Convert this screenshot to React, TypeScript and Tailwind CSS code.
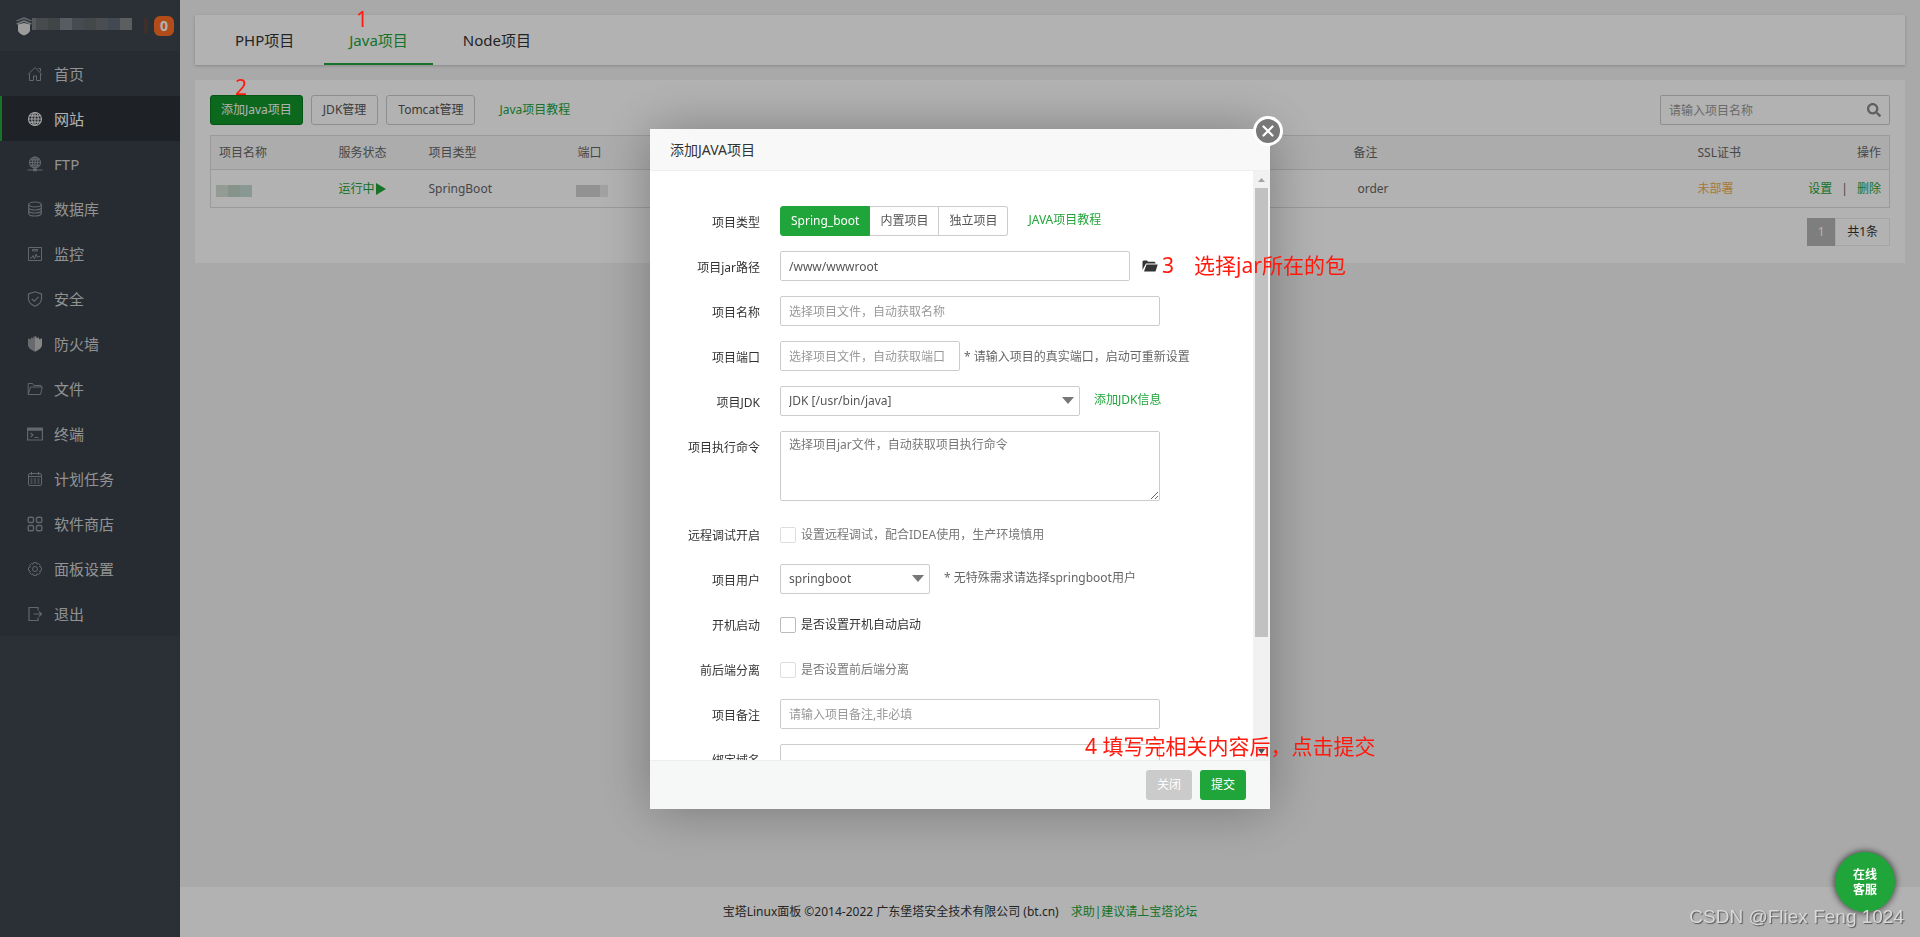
import { useState } from "react";
import type { ReactNode } from "react";
import { FaSearch } from "react-icons/fa";

const stroke = { fill: "none", stroke: "currentColor", strokeWidth: 1 };

const icons: Record<string, ReactNode> = {
  home: (
    <g {...stroke}>
      <path d="M1 8.5 8 1.5l7 7M2.5 7.5v7h4V10h3v4.5h4v-7M11.5 2.5h2v3" />
    </g>
  ),
  site: (
    <g {...stroke} strokeWidth={1.2}>
      <circle cx="8" cy="8" r="6.5" />
      <ellipse cx="8" cy="8" rx="3.2" ry="6.5" />
      <path d="M8 1.5v13M1.5 8h13M2.5 4.8h11M2.5 11.2h11" />
    </g>
  ),
  ftp: (
    <g {...stroke} strokeWidth={1.2}>
      <circle cx="8" cy="6.5" r="5.5" />
      <ellipse cx="8" cy="6.5" rx="2.6" ry="5.5" />
      <path d="M8 1v12M2.5 6.5h11M3.5 3.8h9M3.5 9.2h9M.5 14h15" />
      <path d="M6 14h4" strokeWidth={2.5} />
    </g>
  ),
  database: (
    <g {...stroke} strokeWidth={1.2}>
      <ellipse cx="8" cy="3.5" rx="6.3" ry="2.5" />
      <path d="M1.7 3.5v9c0 3.3 12.6 3.3 12.6 0v-9M1.7 6.5c0 3.3 12.6 3.3 12.6 0M1.7 9.5c0 3.3 12.6 3.3 12.6 0" />
    </g>
  ),
  monitor: (
    <g {...stroke}>
      <path d="M1.5 1.5h13v13h-13zM5.5 3.5h5V5h-5zM3 12h1.5L6 9.5 7.5 13 9 8l1.500 3.500 1-1H13" />
    </g>
  ),
  shield: (
    <g {...stroke} strokeWidth={1.2}>
      <path d="M8 .8 14.5 3v4.8c0 3.5-3 6-6.500 7.500-3.500-1.500-6.500-4-6.500-7.500V3zM4.800 7.800l2.400 2.400 4.400-4.400" />
    </g>
  ),
  firewall: (
    <g>
      <path fill="currentColor" opacity=".7" d="M8 .5v15.3C4 14 1 11.5 1 9V2.5h1.500v1L4 3V1.500h1.500v1l1-.5V.5z" />
      <path fill="currentColor" d="M8 .5v15.3c4-1.800 7-4.300 7-6.800V2.500h-1.500v1L12 3V1.500h-1.500v1l-1-.5V.5z" />
    </g>
  ),
  folder: (
    <g {...stroke}>
      <path d="M1.2 13.5v-11h4.500l1.300 2h7v1.500M1.200 13.500l2.300-7.500h11.800l-1.800 7.500z" />
    </g>
  ),
  terminal: (
    <g>
      <path {...stroke} strokeWidth={1.2} d="M.6 2h14.800v12H.6zM3.500 7L6 9l-2.500 2M7.500 11.500h4" />
      <path fill="currentColor" d="M.6 2h14.800v2.800H.6z" />
    </g>
  ),
  calendar: (
    <g {...stroke}>
      <rect x="1.5" y="2.5" width="13" height="12" rx="1.5" />
      <path d="M1.5 5.5h13M4.5 1v3M11.5 1v3" />
      <path strokeDasharray="2 1.5" d="M3.5 8h9.500M3.500 10h9.500M3.500 12h9.500" />
    </g>
  ),
  store: (
    <g {...stroke} strokeWidth={1.4}>
      <rect x="1.2" y="1.2" width="5.3" height="5.3" rx="1.3" />
      <rect x="9.5" y="1.2" width="5.3" height="5.3" rx="1.3" />
      <rect x="1.2" y="9.5" width="5.3" height="5.3" rx="1.3" />
      <rect x="9.5" y="9.5" width="5.3" height="5.3" rx="1.3" />
    </g>
  ),
  setting: (
    <g {...stroke}>
      <circle cx="8" cy="8" r="2.5" />
      <path d="M6.7 1.5h2.600l.6 1.700 1.600-.7 1.900 1.900-.7 1.600 1.800.7v2.600l-1.800.7.7 1.600-1.900 1.900-1.600-.7-.6 1.700H6.700l-.6-1.700-1.600.7-1.900-1.900.7-1.600-1.800-.7V6.700l1.800-.7-.7-1.600 1.900-1.900 1.600.7z" />
    </g>
  ),
  exit: (
    <g {...stroke} strokeWidth={1.2}>
      <path d="M11 4.5v-3H2v13h9v-3M6.5 8h8M12 5.5 14.5 8 12 10.5" />
    </g>
  ),
};

const menu = [
  { icon: "home", name: "首页" },
  { icon: "site", name: "网站" },
  { icon: "ftp", name: "FTP" },
  { icon: "database", name: "数据库" },
  { icon: "monitor", name: "监控" },
  { icon: "shield", name: "安全" },
  { icon: "firewall", name: "防火墙" },
  { icon: "folder", name: "文件" },
  { icon: "terminal", name: "终端" },
  { icon: "calendar", name: "计划任务" },
  { icon: "store", name: "软件商店" },
  { icon: "setting", name: "面板设置" },
  { icon: "exit", name: "退出" },
];

const tabs = ["PHP项目", "Java项目", "Node项目"];
const types = ["Spring_boot", "内置项目", "独立项目"];

const inputCls =
  "h-[30px] rounded-[2px] border border-[#ccc] bg-white px-2 text-xs text-[#555] placeholder:text-[#999] outline-none";
const linkCls = "text-[#20a53a]";
const btnCls = "h-[30px] rounded-[3px] border border-[#ccc] px-[11px] text-xs text-[#555]";

function Sidebar() {
  return (
    <aside className="fixed inset-y-0 left-0 w-[180px] bg-[#3d454e]">
      <div className="flex h-[51px] items-center pl-4 pr-[6px]">
        <svg viewBox="0 0 16 20" className="h-5 w-4 shrink-0">
          <path d="M0 4.5 8 1l8 3.5-1 1L8 3 1 5.500z" fill="#8d9296" />
          <path d="M0 7.5 8 4l8 3.5-1.500 1.200L8 6 1.500 8.700z" fill="#a3a7aa" />
          <path d="M2 8.5 8 7l6 1.500V14c0 2.500-3 4.500-6 5.500-3-1-6-3-6-5.500z" fill="#e0e0e0" />
        </svg>
        <div className="mb-1 flex h-3">
          <i className="w-1 bg-[#7d8084]" />
          <i className="w-3 bg-[#666c70]" />
          <i className="w-3 bg-[#5e6367]" />
          <i className="w-3 bg-[#7f848d]" />
          <i className="w-3 bg-[#666c74]" />
          <i className="w-3 bg-[#60676c]" />
          <i className="w-3 bg-[#6b7075]" />
          <i className="w-3 bg-[#5f6973]" />
          <i className="w-3 bg-[#85888a]" />
        </div>
        <i className="ml-3 h-4 w-1 rounded-r bg-[#58453f]" />
        <span className="ml-auto h-5 w-5 rounded-[6px] bg-[#ff6f25] text-center text-sm leading-5 font-bold text-white">0</span>
      </div>
      <ul className="bg-[#373f48]">
        {menu.map((m) => (
          <li key={m.name}>
            <a
              href="#"
              className={
                m.icon === "site"
                  ? "flex h-[45px] items-center gap-[11px] border-l-2 border-[#20a53a] bg-[#2c3138] pl-[25px] text-[15px] leading-5 text-white"
                  : "flex h-[45px] items-center gap-[11px] border-l-2 border-[#3a3f42] pl-[25px] text-[15px] leading-5 text-[#d2d2d2]"
              }
            >
              <svg
                viewBox="0 0 16 16"
                className={m.icon === "site" ? "h-4 w-4 text-[#e8e8e8]" : m.icon === "firewall" ? "h-4 w-4 text-[#c0c0c0]" : "h-4 w-4 text-[#8e9398]"}
              >
                {icons[m.icon]}
              </svg>
              {m.name}
            </a>
          </li>
        ))}
      </ul>
    </aside>
  );
}

function ProjectTable() {
  return (
    <table className="mt-[10px] w-full table-fixed border border-[#ddd] text-left text-xs text-[#666]">
      <colgroup>
        <col className="w-[120px]" />
        <col className="w-[90px]" />
        <col className="w-[149px]" />
        <col />
        <col className="w-[344px]" />
        <col className="w-[101px]" />
        <col className="w-[99px]" />
      </colgroup>
      <thead>
        <tr className="h-[34px] border-b border-[#ddd] bg-[#f6f6f6]">
          <th className="px-2 font-normal">项目名称</th>
          <th className="px-2 font-normal">服务状态</th>
          <th className="px-2 font-normal">项目类型</th>
          <th className="px-2 font-normal">端口</th>
          <th className="px-2 font-normal">备注</th>
          <th className="px-2 font-normal">SSL证书</th>
          <th className="px-2 text-right font-normal">操作</th>
        </tr>
      </thead>
      <tbody>
        <tr className="h-[38px]">
          <td className="px-[5px]">
            <div className="mt-1 flex h-3">
              <i className="w-3 bg-[#d3dfd5]" />
              <i className="w-3 bg-[#c0d3c6]" />
              <i className="w-3 bg-[#c5dad2]" />
            </div>
          </td>
          <td className="px-2">
            <a href="#" className="flex items-center text-[#20a53a]">
              运行中
              <svg viewBox="0 0 10 12" className="ml-px h-3 w-[10px]">
                <path d="M0 0l10 6-10 6z" fill="currentColor" />
              </svg>
            </a>
          </td>
          <td className="px-2">SpringBoot</td>
          <td className="px-[6px]">
            <div className="mt-1 flex h-3">
              <i className="w-6 bg-[#d2d2d2]" />
              <i className="w-2 bg-[#e8e8e8]" />
            </div>
          </td>
          <td className="px-3">order</td>
          <td className="px-2">
            <a href="#" className="text-[#f0ad4e]">未部署</a>
          </td>
          <td className="px-2 text-right whitespace-nowrap">
            <a href="#" className={linkCls}>设置</a>
            <span className="mx-[9px]">|</span>
            <a href="#" className={linkCls}>删除</a>
          </td>
        </tr>
      </tbody>
    </table>
  );
}

function Row({ label, id, children }: { label: string; id: string; children: ReactNode }) {
  return (
    <div className="mb-[13px] flex">
      <label htmlFor={id} className="mr-5 h-8 w-[100px] shrink-0 text-right text-xs leading-[34px] text-[#333]">
        {label}
      </label>
      <div className="flex grow items-start text-xs text-[#666]">{children}</div>
    </div>
  );
}

function Select({ id, value, width }: { id: string; value: string; width: string }) {
  return (
    <div className={`relative ${width}`}>
      <select id={id} className={`${inputCls} w-full appearance-none`}>
        <option>{value}</option>
      </select>
      <svg viewBox="0 0 12 7" className="pointer-events-none absolute top-[11px] right-[6px] h-[7px] w-3">
        <path d="M0 0h12L6 7z" fill="#777" />
      </svg>
    </div>
  );
}

function Check({ id, text, disabled }: { id: string; text: string; disabled?: boolean }) {
  return (
    <div className="flex h-8 items-center gap-[5px]">
      <input
        id={id}
        type="checkbox"
        disabled={disabled}
        className={disabled ? "h-4 w-4 appearance-none rounded-[2px] border border-[#ddd]" : "h-4 w-4 appearance-none rounded-[2px] border border-[#bbb]"}
      />
      <label htmlFor={id} className={disabled ? "text-[#777]" : "text-[#333]"}>{text}</label>
    </div>
  );
}

function ProjectDialog() {
  const [type, setType] = useState(types[0]);

  return (
    <div role="dialog" aria-label="添加JAVA项目" className="relative flex h-[680px] w-[620px] flex-col bg-white shadow-[1px_1px_50px_rgba(0,0,0,0.3)]">
      <header className="flex h-[42px] shrink-0 items-center border-b border-[#eee] bg-[#f8f8f8] px-5 text-sm text-[#333]">添加JAVA项目</header>
      <button aria-label="关闭窗口" className="absolute -top-[13px] -right-[13px] h-[30px] w-[30px] rounded-full border-[3px] border-white bg-[#787878]">
        <svg viewBox="0 0 24 24" className="h-6 w-6">
          <path d="M7.5 7.5l9 9M16.5 7.5l-9 9" stroke="#fff" strokeWidth="2.2" strokeLinecap="round" fill="none" />
        </svg>
      </button>

      <div className="flex min-h-0 grow">
        <form className="grow overflow-y-auto pt-[35px] pl-[10px] [scrollbar-width:none]">
          <Row label="项目类型" id="type">
            <div id="type" className="flex">
              {types.map((t) => (
                <button
                  key={t}
                  type="button"
                  onClick={() => setType(t)}
                  className={
                    t === type
                      ? "h-[30px] rounded-l-[3px] border border-[#20a53a] bg-[#20a53a] px-[10px] text-white"
                      : "h-[30px] border border-l-0 border-[#ccc] px-[10px] text-[#555] last:rounded-r-[3px]"
                  }
                >
                  {t}
                </button>
              ))}
            </div>
            <a href="#" className="ml-5 leading-7 text-[#20a53a]">JAVA项目教程</a>
          </Row>
          <Row label="项目jar路径" id="jar">
            <input id="jar" defaultValue="/www/wwwroot" className={`${inputCls} w-[350px]`} />
            <svg viewBox="0 0 16 14" className="mt-2 ml-3 h-[14px] w-4 text-[#333]">
              <path d="M.5 11V2.500l1-1H5l1 1.200h6.500l1 1v.8H4L1.500 9z" fill="currentColor" />
              <path d="M4.5 5.5h11.200l-2.200 7H2z" fill="currentColor" />
            </svg>
          </Row>
          <Row label="项目名称" id="name">
            <input id="name" placeholder="选择项目文件，自动获取名称" className={`${inputCls} w-[380px]`} />
          </Row>
          <Row label="项目端口" id="port">
            <input id="port" placeholder="选择项目文件，自动获取端口" className={`${inputCls} w-[180px]`} />
            <span className="ml-1 leading-8">* 请输入项目的真实端口，启动可重新设置</span>
          </Row>
          <Row label="项目JDK" id="jdk">
            <Select id="jdk" value="JDK [/usr/bin/java]" width="w-[300px]" />
            <a href="#" className="ml-[14px] leading-7 text-[#20a53a]">添加JDK信息</a>
          </Row>
          <Row label="项目执行命令" id="cmd">
            <textarea
              id="cmd"
              placeholder="选择项目jar文件，自动获取项目执行命令"
              className="mb-[5px] h-[70px] w-[380px] rounded-[2px] border border-[#ccc] px-2 py-1 text-xs leading-[18px] outline-none placeholder:text-[#777]"
            />
          </Row>
          <Row label="远程调试开启" id="debug">
            <Check id="debug" text="设置远程调试，配合IDEA使用，生产环境慎用" disabled />
          </Row>
          <Row label="项目用户" id="user">
            <Select id="user" value="springboot" width="w-[150px]" />
            <span className="ml-[14px] leading-7">* 无特殊需求请选择springboot用户</span>
          </Row>
          <Row label="开机启动" id="boot">
            <Check id="boot" text="是否设置开机自动启动" />
          </Row>
          <Row label="前后端分离" id="split">
            <Check id="split" text="是否设置前后端分离" disabled />
          </Row>
          <Row label="项目备注" id="ps">
            <input id="ps" placeholder="请输入项目备注,非必填" className={`${inputCls} w-[380px]`} />
          </Row>
          <Row label="绑定域名" id="domain">
            <textarea id="domain" className="h-[100px] w-[380px] rounded-[2px] border border-[#ccc] px-2 py-1 text-xs outline-none" />
          </Row>
        </form>
        <div className="flex w-[17px] shrink-0 flex-col items-center bg-[#f1f1f1]">
          <svg viewBox="0 0 17 17" className="size-[17px] shrink-0">
            <path d="M5 11h7L8.5 7z" fill="#a3a3a3" />
          </svg>
          <div className="h-[449px] w-[13px] bg-[#c1c1c1]" />
          <svg viewBox="0 0 17 17" className="mt-auto size-[17px] shrink-0">
            <path d="M5 6h7l-3.500 5z" fill="#505050" />
          </svg>
        </div>
      </div>

      <footer className="flex h-[49px] shrink-0 items-center justify-end gap-2 border-t border-[#eee] bg-[#f6f8f8] pr-6 text-xs text-white">
        <button className="h-[30px] rounded-[3px] bg-[#cbcbcb] px-[11px]">关闭</button>
        <button className="h-[30px] rounded-[3px] bg-[#20a53a] px-[11px]">提交</button>
      </footer>

      <div className="pointer-events-none absolute top-[120px] left-[512px] flex gap-5 text-[21px] leading-8 whitespace-nowrap text-[#ff1a0d]">
        <span>3</span>
        <span>选择jar所在的包</span>
      </div>
      <div className="pointer-events-none absolute top-[601px] left-[435px] text-[21px] leading-8 whitespace-nowrap text-[#ff1a0d]">
        4 填写完相关内容后，点击提交
      </div>
    </div>
  );
}

export default function App() {
  return (
    <div className="flex min-h-screen flex-col bg-[#f2f2f2] font-['Noto_Sans','Noto_Sans_CJK_SC',sans-serif]">
      <Sidebar />
      <main className="ml-[180px] grow p-[15px]">
        <nav className="flex h-[50px] gap-[5px] bg-white pl-[15px] shadow-[0_1px_3px_rgba(0,0,0,0.2)]">
          {tabs.map((t) => (
            <a
              key={t}
              href="#"
              className={
                t === "Java项目"
                  ? "border-b-2 border-[#20a53a] px-[25px] text-[15px] leading-[50px] text-[#20a53a]"
                  : "px-[25px] text-[15px] leading-[50px] text-[#333]"
              }
            >
              {t}
            </a>
          ))}
        </nav>

        <section className="mt-[15px] bg-white p-[15px] pb-[17px]">
          <div className="flex items-center gap-2">
            <button className="h-[30px] rounded-[3px] border border-[#0a7a1f] bg-[#10952a] px-[10px] text-xs text-white">添加Java项目</button>
            <button className={btnCls}>JDK管理</button>
            <button className={btnCls}>Tomcat管理</button>
            <a href="#" className="ml-4 text-xs text-[#20a53a]">Java项目教程</a>
            <div className="relative ml-auto">
              <input aria-label="请输入项目名称" placeholder="请输入项目名称" className={`${inputCls} w-[230px]`} />
              <FaSearch className="absolute top-2 right-[9px] size-[14px] text-[#888]" />
            </div>
          </div>
          <ProjectTable />
          <div className="mt-[10px] flex justify-end text-xs leading-7">
            <span className="w-7 bg-[#b5b5b5] text-center text-white">1</span>
            <span className="border border-[#ececec] px-[11px] leading-[26px] text-[#333]">共1条</span>
          </div>
        </section>
      </main>
      <footer className="flex h-[50px] items-center justify-center gap-3 bg-white text-xs leading-5 text-[#333]">
        <span>宝塔Linux面板 ©2014-2022 广东堡塔安全技术有限公司 (bt.cn)</span>
        <a href="#" className={linkCls}>求助|建议请上宝塔论坛</a>
      </footer>

      <div className="fixed inset-0 flex items-center justify-center bg-black/30 pt-px">
        <ProjectDialog />
      </div>

      <button className="fixed right-[25px] bottom-[25px] flex size-[60px] items-center justify-center rounded-full bg-[#20a53a] px-4 text-xs leading-[15px] font-bold text-white shadow-[0_0_6px_1px_rgba(0,0,0,0.6)]">
        在线客服
      </button>
      <span className="fixed top-[3px] left-[356px] text-[21px] leading-8 text-[#ff1a0d]">1</span>
      <span className="fixed top-[71px] left-[235px] text-[21px] leading-8 text-[#ff1a0d]">2</span>
      <span className="fixed right-4 bottom-[7px] font-['Liberation_Sans',sans-serif] text-[19px] leading-[26px] text-[#d9d9d9] [text-shadow:1px_1px_1px_#555]">
        CSDN @Fliex Feng 1024
      </span>
    </div>
  );
}
